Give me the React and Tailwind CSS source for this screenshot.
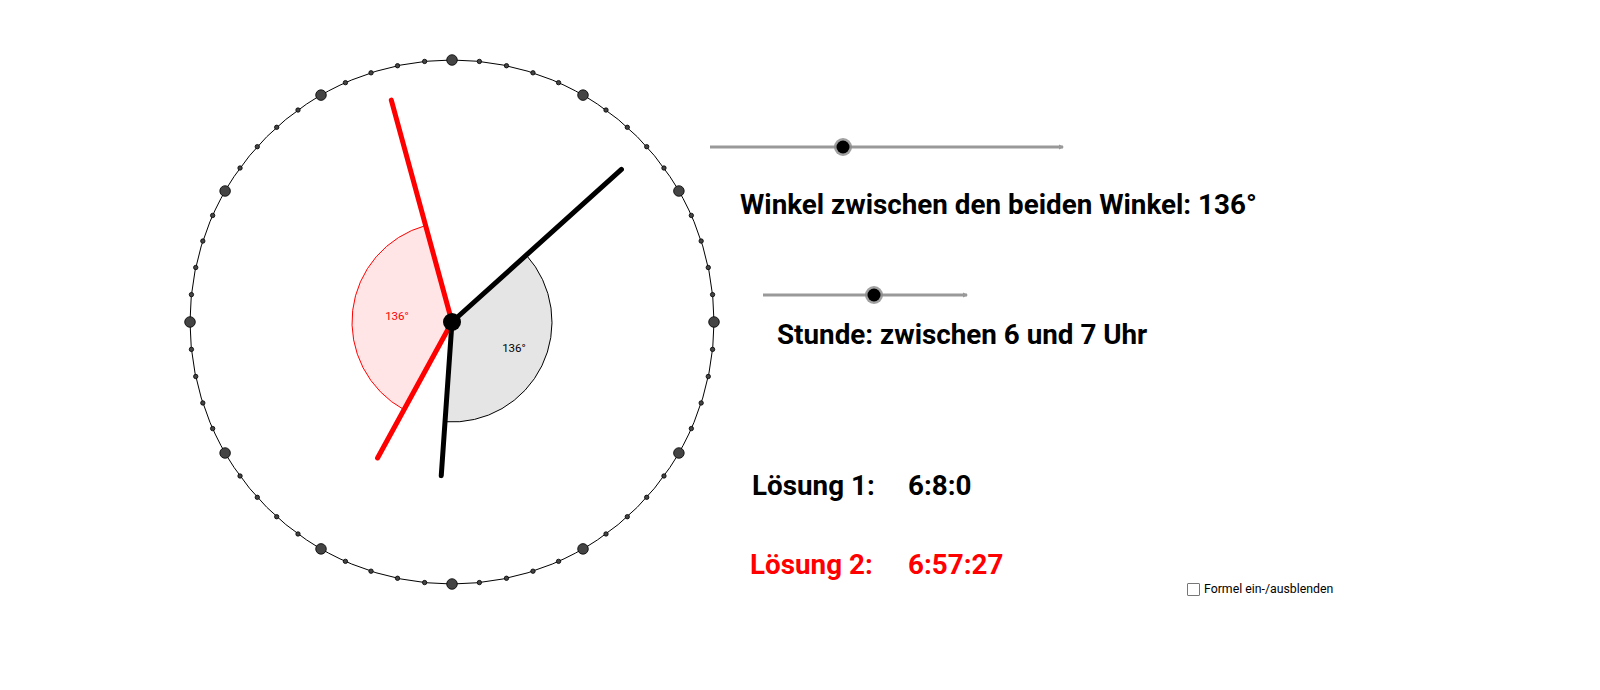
const CX = 452
const CY = 322
const R = 262
const ARC = 100

function pt(deg, r) {
  const a = (deg * Math.PI) / 180
  return [CX + r * Math.sin(a), CY - r * Math.cos(a)]
}

function sector(from, to, r) {
  const [x1, y1] = pt(from, r)
  const [x2, y2] = pt(to, r)
  const large = to - from > 180 ? 1 : 0
  return `M${CX} ${CY} L${x1} ${y1} A${r} ${r} 0 ${large} 1 ${x2} ${y2} Z`
}

function Hand({ deg, len, color }) {
  const [x, y] = pt(deg, len)
  return <line x1={CX} y1={CY} x2={x} y2={y} stroke={color} strokeWidth="5" strokeLinecap="round" />
}

function Clock() {
  const ticks = Array.from({ length: 60 }, (_, i) => i)
  // 6:8:0 und 6:57:27
  const min1 = 48
  const hour1 = 184
  const min2 = 344.7
  const hour2 = 208.7
  return (
    <svg width="700" height="690" className="shrink-0 overflow-visible">
      <circle cx={CX} cy={CY} r={R} fill="none" stroke="#000" strokeWidth="1" />
      {ticks.map((i) => {
        const [x, y] = pt(i * 6, R)
        const big = i % 5 === 0
        return (
          <circle key={i} cx={x} cy={y} r={big ? 5.3 : 2.2} fill="#444" stroke="#000" strokeWidth="0.8" />
        )
      })}
      <path d={sector(hour2, min2, ARC)} fill="#ffe5e5" stroke="#ff0000" strokeWidth="1" />
      <path d={sector(min1, hour1, ARC)} fill="#e5e5e5" stroke="#000" strokeWidth="1" />
      <text x="397" y="320" fontSize="11.5" fill="#ff0000" textAnchor="middle" fontFamily="Roboto, sans-serif">136°</text>
      <text x="514" y="352" fontSize="11.5" fill="#000" textAnchor="middle" fontFamily="Roboto, sans-serif">136°</text>
      <Hand deg={min2} len={230} color="#ff0000" />
      <Hand deg={hour2} len={155} color="#ff0000" />
      <Hand deg={min1} len={228} color="#000" />
      <Hand deg={hour1} len={154} color="#000" />
      <circle cx={CX} cy={CY} r="9" fill="#000" />
    </svg>
  )
}

function Slider({ width, knob }) {
  return (
    <svg width={width + 4} height="20" className="block">
      <line x1="0" y1="10" x2={width} y2="10" stroke="#999" strokeWidth="3" />
      <path d={`M${width - 4} 7.5 L${width + 1} 10 L${width - 4} 12.5 Z`} fill="#999" />
      <circle cx={knob} cy="10" r="9" fill="#888" opacity="0.8" />
      <circle cx={knob} cy="10" r="6.5" fill="#000" />
    </svg>
  )
}

export default function App() {
  return (
    <div className="w-full h-[690px] bg-white flex overflow-hidden font-['Roboto',sans-serif] text-black">
      <Clock />
      <div className="flex flex-col">
        <div className="mt-[137px] ml-[10px]">
          <Slider width={353} knob={133} />
        </div>
        <div className="mt-[32px] ml-[40px] h-[32px] leading-[32px] text-[27.8px] font-bold whitespace-nowrap">
          Winkel zwischen den beiden Winkel: 136°
        </div>
        <div className="mt-[64px] ml-[63px]">
          <Slider width={204} knob={111} />
        </div>
        <div className="mt-[14px] ml-[77px] h-[32px] leading-[32px] text-[27.8px] font-bold whitespace-nowrap">
          Stunde: zwischen 6 und 7 Uhr
        </div>
        <div className="mt-[119px] ml-[52px] h-[32px] leading-[32px] text-[27.8px] font-bold flex whitespace-nowrap">
          <span className="w-[156px]">Lösung 1:</span>
          <span>6:8:0</span>
        </div>
        <div className="mt-[47px] ml-[50px] h-[32px] leading-[32px] text-[27.8px] font-bold flex whitespace-nowrap text-[#ff0000]">
          <span className="w-[158px]">Lösung 2:</span>
          <span>6:57:27</span>
        </div>
        <div className="mt-[1px] ml-[487px] h-[14px] flex items-center gap-[4px] whitespace-nowrap">
          <span className="w-[13px] h-[13px] border border-[#777] rounded-[1px] bg-white" />
          <span className="text-[12.3px] leading-[14px]">Formel ein-/ausblenden</span>
        </div>
      </div>
    </div>
  )
}
